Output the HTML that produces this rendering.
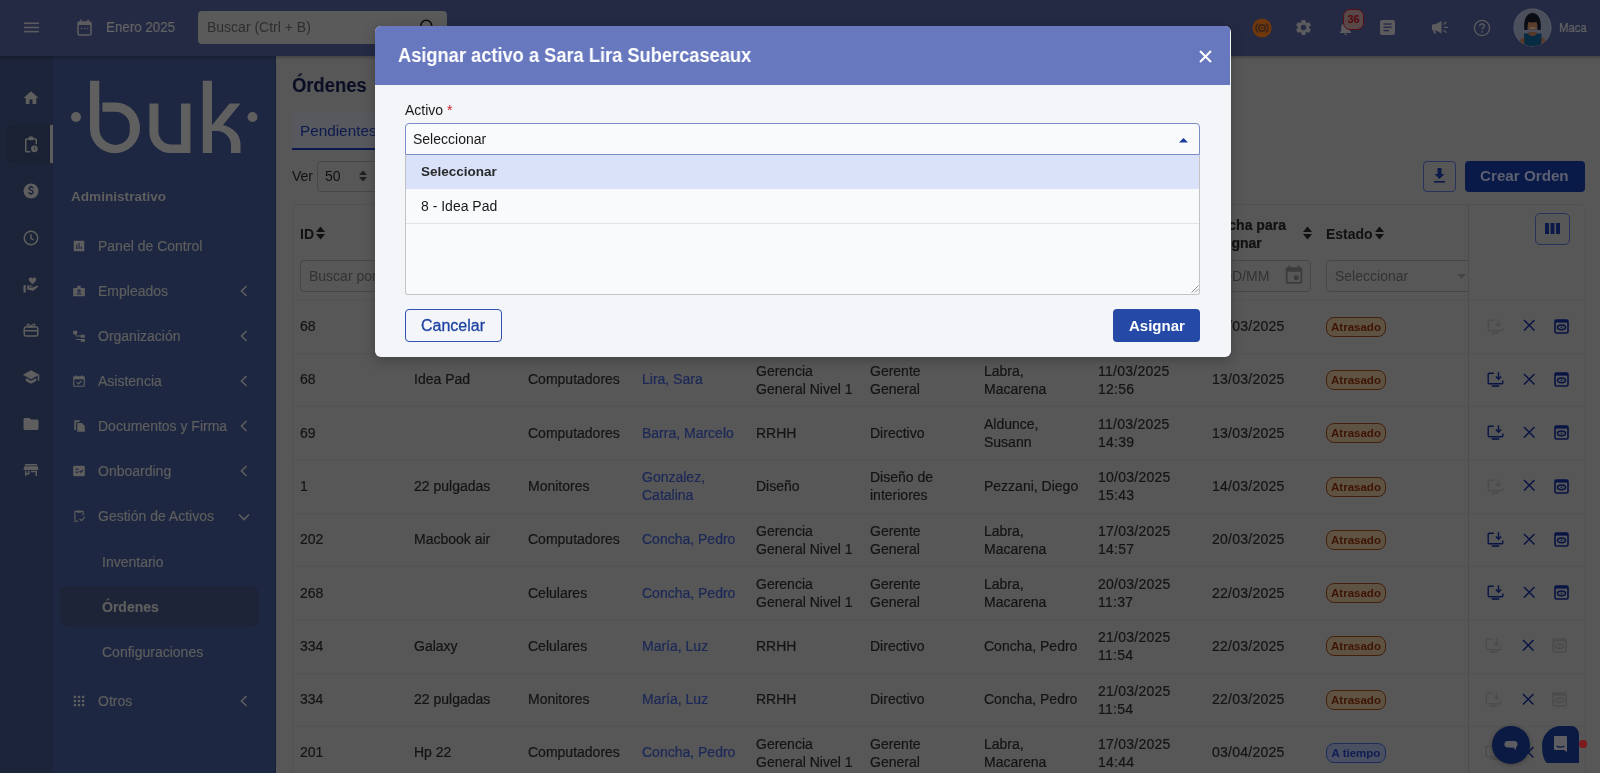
<!DOCTYPE html>
<html><head><meta charset="utf-8"><style>
*{box-sizing:border-box;margin:0;padding:0}
html,body{width:1600px;height:773px;overflow:hidden;background:#575757;font-family:"Liberation Sans",sans-serif;position:relative;-webkit-font-smoothing:antialiased}
.a{position:absolute}
.t,.td,.mi,.badge{will-change:transform}
.t{position:absolute;white-space:nowrap;line-height:1}
.mi{position:absolute;left:98px;font-size:14px;color:#5e5e5e;white-space:nowrap;line-height:1;-webkit-text-stroke:0.2px #5e5e5e}
.td{position:absolute;font-size:14px;color:#141414;white-space:nowrap;line-height:18.4px;-webkit-text-stroke:0.2px currentColor}
.lk{color:#1b2858}
.rl{position:absolute;left:292px;width:1293px;height:1px;background:#525252}
.badge{position:absolute;left:1326px;width:60px;height:20px;border-radius:8px;background:#5e5242;border:1px solid #44200c;color:#3e1404;font-weight:bold;font-size:11.5px;line-height:18px;text-align:center}
</style></head><body>
<div class="a" style="left:0;top:0;width:1600px;height:56px;background:#252a44"></div>
<div class="a" style="left:0;top:56px;width:53px;height:717px;background:#1c2439"></div>
<div class="a" style="left:53px;top:56px;width:223px;height:717px;background:#1e2741"></div>
<div class="a" style="left:275px;top:56px;width:1px;height:717px;background:#172039"></div>
<div class="a" style="left:0;top:56px;width:1600px;height:4px;background:linear-gradient(rgba(0,0,0,.22),rgba(0,0,0,0))"></div>
<svg class="a" style="left:24px;top:22px" width="16" height="11"><g stroke="#5c5c5f" stroke-width="1.6"><line x1="0" y1="1.3" x2="15" y2="1.3"/><line x1="0" y1="5.5" x2="15" y2="5.5"/><line x1="0" y1="9.6" x2="15" y2="9.6"/></g></svg>
<svg class="a" style="left:77px;top:19px" width="15" height="17" viewBox="0 0 15 17"><rect x="1" y="3" width="13" height="13" rx="1.5" fill="none" stroke="#5c5c5f" stroke-width="1.6"/><rect x="1" y="3" width="13" height="3" fill="#5c5c5f"/><line x1="4" y1="0.5" x2="4" y2="3" stroke="#5c5c5f" stroke-width="1.5"/><line x1="11" y1="0.5" x2="11" y2="3" stroke="#5c5c5f" stroke-width="1.5"/><circle cx="4.5" cy="9.5" r=".8" fill="#5c5c5f"/><circle cx="7.5" cy="9.5" r=".8" fill="#5c5c5f"/><circle cx="10.5" cy="9.5" r=".8" fill="#5c5c5f"/></svg>
<div class="t" style="left:106px;top:19px;font-size:15px;color:#666;-webkit-text-stroke:0.2px #666;transform:scaleX(0.89);transform-origin:0 0">Enero 2025</div>
<div class="a" style="left:198px;top:11px;width:249px;height:33px;background:#5a5a5a;border-radius:4px"></div>
<div class="t" style="left:207px;top:20px;font-size:14px;color:#2e2e2e">Buscar (Ctrl + B)</div>
<svg class="a" style="left:419px;top:17px" width="18" height="18"><circle cx="7.3" cy="8.6" r="5.4" fill="none" stroke="#0a0a0a" stroke-width="1.5"/></svg>
<svg class="a" style="left:1252px;top:18px" width="20" height="20"><circle cx="10" cy="10" r="9.6" fill="#6e380c"/><circle cx="10" cy="10" r="3.2" fill="none" stroke="#3a2418" stroke-width="1.5"/><circle cx="10" cy="10" r="1" fill="#3a2418"/><path d="M6 5.5a6 6 0 0 0 0 9M14 5.5a6 6 0 0 1 0 9" fill="none" stroke="#3a2418" stroke-width="1.5"/></svg>
<svg class="a" style="left:1294px;top:18px" width="19" height="19" viewBox="0 0 24 24"><path fill="#5c5c5f" d="M19.14 12.94c.04-.3.06-.61.06-.94 0-.32-.02-.64-.07-.94l2.03-1.58a.49.49 0 0 0 .12-.61l-1.92-3.32a.488.488 0 0 0-.59-.22l-2.39.96c-.5-.38-1.03-.7-1.62-.94l-.36-2.54a.484.484 0 0 0-.48-.41h-3.84c-.24 0-.43.17-.47.41l-.36 2.54c-.59.24-1.13.57-1.62.94l-2.39-.96c-.22-.08-.47 0-.59.22L2.74 8.87c-.12.21-.08.47.12.61l2.03 1.58c-.05.3-.09.63-.09.94s.02.64.07.94l-2.03 1.58a.49.49 0 0 0-.12.61l1.92 3.32c.12.22.37.29.59.22l2.39-.96c.5.38 1.03.7 1.62.94l.36 2.54c.05.24.24.41.48.41h3.84c.24 0 .44-.17.47-.41l.36-2.54c.59-.24 1.13-.56 1.62-.94l2.39.96c.22.08.47 0 .59-.22l1.92-3.32c.12-.22.07-.47-.12-.61l-2.01-1.58zM12 15.6c-1.98 0-3.6-1.62-3.6-3.6s1.62-3.6 3.6-3.6 3.6 1.62 3.6 3.6-1.62 3.6-3.6 3.6z"/></svg>
<svg class="a" style="left:1337px;top:19px" width="17" height="18" viewBox="0 0 24 24"><path fill="#5c5c5f" d="M12 22c1.1 0 2-.9 2-2h-4c0 1.1.9 2 2 2zm6-6v-5c0-3.07-1.63-5.64-4.5-6.32V4c0-.83-.67-1.5-1.5-1.5s-1.5.67-1.5 1.5v.68C7.64 5.36 6 7.92 6 11v5l-2 2v1h16v-1l-2-2z"/></svg>
<div class="a" style="left:1343px;top:9px;width:21px;height:21px;border-radius:7px;background:#584848;border:1.5px solid #561018;color:#52080e;font-weight:bold;font-size:11px;line-height:18px;text-align:center">36</div>
<svg class="a" style="left:1380px;top:20px" width="15" height="15"><rect x="0" y="0" width="15" height="15" rx="2" fill="#5c5c5f"/><g stroke="#252a44" stroke-width="1.4"><line x1="3.5" y1="4" x2="11.5" y2="4"/><line x1="3.5" y1="7.3" x2="11.5" y2="7.3"/><line x1="3.5" y1="10.6" x2="9" y2="10.6"/></g></svg>
<svg class="a" style="left:1432px;top:21px" width="17" height="13" viewBox="0 0 17 13"><path fill="#5c5c5f" d="M0 4.2a1 1 0 0 1 1-1h2.5L9.5 0v12.5L3.5 9.3H3l1 3.2H2L1 9.3a1 1 0 0 1-1-1z"/><g stroke="#5c5c5f" stroke-width="1.3" stroke-linecap="round"><line x1="12.5" y1="6.3" x2="15.5" y2="6.3"/><line x1="12" y1="3" x2="14" y2="1.3"/><line x1="12" y1="9.6" x2="14" y2="11.3"/></g></svg>
<svg class="a" style="left:1473px;top:19px" width="18" height="18"><circle cx="9" cy="9" r="7.6" fill="none" stroke="#5c5c5f" stroke-width="1.3"/><path d="M6.6 7.2c0-1.4 1.1-2.4 2.4-2.4s2.4 1 2.4 2.3c0 1.6-2.3 1.7-2.3 3.4" fill="none" stroke="#5c5c5f" stroke-width="1.3"/><circle cx="9.1" cy="12.8" r=".9" fill="#5c5c5f"/></svg>
<svg class="a" style="left:1513px;top:8px" width="39" height="39" viewBox="0 0 39 39"><defs><clipPath id="av"><circle cx="19.5" cy="19.5" r="18.6"/></clipPath></defs><circle cx="19.5" cy="19.5" r="19" fill="#5a5e68"/><circle cx="19.5" cy="19.5" r="18.3" fill="#4b4f5c"/><g clip-path="url(#av)"><path d="M5 39c0-6 2-9 7-10h15c5 1 7 4 7 10z" fill="#55392a"/><path d="M11.5 39l-0.5-13.5h17.5l-0.5 13.5z" fill="#062b42"/><path d="M15 24h9l-1 3c-2 1.5-5 1.5-7 0z" fill="#55392a"/><ellipse cx="19.5" cy="15.5" rx="5.8" ry="7" fill="#5b3d2c"/><path d="M11.5 22c-1.5-10 2-17 8-17s9.5 7 8 17h-3c0-3 0-6-1-8-3 .5-6 .5-8 0-1 2-1 5-1 8z" fill="#0a0c14"/><path d="M17 19.5c1.5 1 3.5 1 5 0" stroke="#8a8a8a" stroke-width=".8" fill="none"/></g></svg>
<div class="t" style="left:1559px;top:21px;font-size:13px;color:#666;-webkit-text-stroke:0.2px #666;transform:scaleX(0.87);transform-origin:0 0">Maca</div>
<div class="a" style="left:7px;top:125px;width:46px;height:38px;background:#1a2133;border-radius:8px 0 0 8px"></div>
<div class="a" style="left:50px;top:125px;width:3px;height:38px;background:#5c5c5c"></div>
<svg class="a" style="left:22px;top:89px" width="18" height="18" viewBox="0 0 24 24"><path fill="#5e5e5e" d="M10 20v-6h4v6h5v-8h3L12 3 2 12h3v8z"/></svg>
<svg class="a" style="left:22px;top:136px" width="18" height="18" viewBox="0 0 24 24"><path fill="none" stroke="#5e5e5e" stroke-width="2" d="M9 4H6a1 1 0 0 0-1 1v15a1 1 0 0 0 1 1h5M15 4h3a1 1 0 0 1 1 1v6"/><rect x="8.5" y="1" width="7" height="4.5" rx="1.2" fill="#5e5e5e"/><circle cx="12" cy="1.6" r="1.3" fill="#5e5e5e"/><circle cx="16.5" cy="17" r="4.5" fill="#5e5e5e"/><path d="M16.5 14.8v2.4l1.6 1" stroke="#1a2133" stroke-width="1.2" fill="none"/></svg>
<svg class="a" style="left:22px;top:182px" width="18" height="18" viewBox="0 0 24 24"><circle cx="12" cy="12" r="10" fill="#5e5e5e"/><path d="M14.8 8.6c-.3-1.2-1.3-2-2.8-2-1.6 0-2.7.9-2.7 2.1 0 2.9 5.6 1.6 5.6 4.7 0 1.3-1.2 2.2-2.9 2.2-1.6 0-2.7-.9-2.9-2.2M12 5v1.6M12 15.6v1.6" fill="none" stroke="#1c2439" stroke-width="1.8"/></svg>
<svg class="a" style="left:22px;top:229px" width="18" height="18" viewBox="0 0 24 24"><circle cx="12" cy="12" r="9" fill="none" stroke="#5e5e5e" stroke-width="2"/><path d="M12 7v5.5l3.5 2" stroke="#5e5e5e" stroke-width="2" fill="none"/></svg>
<svg class="a" style="left:22px;top:276px" width="18" height="18" viewBox="0 0 24 24"><path fill="#5e5e5e" d="M16.5 2c-1.2 0-2 .8-2.5 1.5C13.5 2.8 12.7 2 11.5 2 10 2 9 3.2 9 4.6c0 2.2 2.5 3.9 5 6.2 2.5-2.3 5-4 5-6.2C19 3.2 18 2 16.5 2zM2 12h3v10H2zM7 12.5h5.5c1 0 1.8.7 1.8 1.6H9.5v1.2h5.2l4.8-2.2c.9-.3 1.9.1 2.3.9L15 19.5l-8-1.5z"/></svg>
<svg class="a" style="left:22px;top:321px" width="18" height="18" viewBox="0 0 24 24"><rect x="3" y="8" width="18" height="12" rx="2" fill="none" stroke="#5e5e5e" stroke-width="2"/><line x1="3" y1="13" x2="21" y2="13" stroke="#5e5e5e" stroke-width="2"/><path d="M12 8c-1-3-4-5-5-3s3 3 5 3c2 0 6-1 5-3s-4 0-5 3" fill="none" stroke="#5e5e5e" stroke-width="1.6"/></svg>
<svg class="a" style="left:22px;top:368px" width="18" height="18" viewBox="0 0 24 24"><path fill="#5e5e5e" d="M5 13.2v4L12 21l7-3.8v-4L12 17zM12 3L1 9l11 6 9-4.9V17h2V9z"/></svg>
<svg class="a" style="left:22px;top:415px" width="18" height="18" viewBox="0 0 24 24"><path fill="#5e5e5e" d="M10 4H4c-1.1 0-2 .9-2 2v12c0 1.1.9 2 2 2h16c1.1 0 2-.9 2-2V8c0-1.1-.9-2-2-2h-8l-2-2z"/></svg>
<svg class="a" style="left:22px;top:461px" width="18" height="18" viewBox="0 0 24 24"><path fill="#5e5e5e" d="M4 4h16v2H4zM3 7h18l1 5H2zM4 13h2v7H4zM18 13h2v7h-2zM6 18h4v-5h-2v3H6zM12 13h6v2h-6z"/></svg>
<svg class="a" style="left:60px;top:75px" width="205" height="85" viewBox="60 75 205 85">
<circle cx="76" cy="117" r="5" fill="#5f5f5f"/>
<circle cx="252.5" cy="117" r="5" fill="#5f5f5f"/>
<path fill="#5f5f5f" d="M90 80.7h9.3v21.7h16.5a24.5 25.5 0 0 1 24.2 25.5a25.3 25.3 0 0 1-25.3 25.3h-0.2a24.5 24.5 0 0 1-24.5-24.5zM99.3 111.8v16.7a16.4 16.4 0 0 0 16.4 16.4a14.1 14.1 0 0 0 14.1-14.1v-4.5a14.5 14.5 0 0 0-14.5-14.5z"/>
<path fill="#5f5f5f" d="M149.4 103.5h9v28a13 13 0 0 0 13 13h9.6v-41h9.4v49.5h-20a21 21 0 0 1-21-21z"/>
<path fill="#5f5f5f" d="M202.8 80.7h9.2v44.5l17.5-21.7h11l-17.5 21.5c9 2 17.5 9 17.5 19v9h-9.5v-8.5c0-7.5-7-13.5-14-13.5h-5v22h-9.2z"/>
<rect x="99.4" y="101.5" width="3" height="10.5" fill="#1e2741"/>
</svg>
<div class="t" style="left:71px;top:190px;font-size:13.6px;font-weight:bold;color:#5e5e5e">Administrativo</div>
<div class="mi" style="top:239px">Panel de Control</div>
<div class="mi" style="top:284px">Empleados</div>
<svg class="a" style="left:240px;top:285px" width="8" height="12"><path d="M6.5 1l-5 5 5 5" fill="none" stroke="#5e5e5e" stroke-width="1.6"/></svg>
<div class="mi" style="top:329px">Organización</div>
<svg class="a" style="left:240px;top:330px" width="8" height="12"><path d="M6.5 1l-5 5 5 5" fill="none" stroke="#5e5e5e" stroke-width="1.6"/></svg>
<div class="mi" style="top:374px">Asistencia</div>
<svg class="a" style="left:240px;top:375px" width="8" height="12"><path d="M6.5 1l-5 5 5 5" fill="none" stroke="#5e5e5e" stroke-width="1.6"/></svg>
<div class="mi" style="top:419px">Documentos y Firma</div>
<svg class="a" style="left:240px;top:420px" width="8" height="12"><path d="M6.5 1l-5 5 5 5" fill="none" stroke="#5e5e5e" stroke-width="1.6"/></svg>
<div class="mi" style="top:464px">Onboarding</div>
<svg class="a" style="left:240px;top:465px" width="8" height="12"><path d="M6.5 1l-5 5 5 5" fill="none" stroke="#5e5e5e" stroke-width="1.6"/></svg>
<div class="mi" style="top:509px">Gestión de Activos</div>
<svg class="a" style="left:238px;top:513px" width="12" height="8"><path d="M1 1.5l5 5 5-5" fill="none" stroke="#5e5e5e" stroke-width="1.6"/></svg>
<div class="mi" style="top:694px">Otros</div>
<svg class="a" style="left:240px;top:695px" width="8" height="12"><path d="M6.5 1l-5 5 5 5" fill="none" stroke="#5e5e5e" stroke-width="1.6"/></svg>
<svg class="a" style="left:72px;top:239px" width="14" height="14" viewBox="0 0 24 24"><path fill="#5e5e5e" d="M3 3h18v18H3z"/><g stroke="#1e2741" stroke-width="2"><line x1="8" y1="10" x2="8" y2="17"/><line x1="12" y1="7" x2="12" y2="17"/><line x1="16" y1="13" x2="16" y2="17"/></g></svg>
<svg class="a" style="left:72px;top:284px" width="14" height="14" viewBox="0 0 24 24"><path fill="#5e5e5e" d="M2 7h20v14H2zM9 3h6v4H9z"/><g stroke="#1e2741" stroke-width="2"><circle cx="12" cy="12" r="2" fill="none"/><line x1="8" y1="17" x2="16" y2="17"/></g></svg>
<svg class="a" style="left:72px;top:329px" width="14" height="14" viewBox="0 0 24 24"><path fill="#5e5e5e" d="M2 3h7v6H2zM15 10h7v5h-7zM15 17h7v5h-7zM5 9h2v10h8v-2H7v-4h8v-2H5z"/></svg>
<svg class="a" style="left:72px;top:374px" width="14" height="14" viewBox="0 0 24 24"><rect x="3" y="5" width="18" height="16" rx="1" fill="none" stroke="#5e5e5e" stroke-width="2"/><rect x="3" y="5" width="18" height="4" fill="#5e5e5e"/><path d="M8 14l3 3 5-5" fill="none" stroke="#5e5e5e" stroke-width="2"/><line x1="7" y1="2" x2="7" y2="5" stroke="#5e5e5e" stroke-width="2"/><line x1="17" y1="2" x2="17" y2="5" stroke="#5e5e5e" stroke-width="2"/></svg>
<svg class="a" style="left:72px;top:419px" width="14" height="14" viewBox="0 0 24 24"><path fill="#5e5e5e" d="M4 2h9v3H7v14H4zM9 7h8l5 5v10H9z"/></svg>
<svg class="a" style="left:72px;top:464px" width="14" height="14" viewBox="0 0 24 24"><rect x="2" y="3" width="20" height="18" rx="2" fill="#5e5e5e"/><g stroke="#1e2741" stroke-width="2" fill="none"><line x1="6" y1="9" x2="11" y2="9"/><line x1="6" y1="14" x2="11" y2="14"/><path d="M13 12l2 2 4-4"/></g></svg>
<svg class="a" style="left:72px;top:509px" width="14" height="14" viewBox="0 0 24 24"><path fill="none" stroke="#5e5e5e" stroke-width="2" d="M9 4H5v17h6M15 4h4v7"/><rect x="8.5" y="2.5" width="7" height="4" rx="1" fill="#5e5e5e"/><path d="M13 17l3 3 6-6" fill="none" stroke="#5e5e5e" stroke-width="2"/></svg>
<svg class="a" style="left:72px;top:694px" width="14" height="14" viewBox="0 0 24 24"><g fill="#5e5e5e"><rect x="3" y="3" width="4" height="4"/><rect x="10" y="3" width="4" height="4"/><rect x="17" y="3" width="4" height="4"/><rect x="3" y="10" width="4" height="4"/><rect x="10" y="10" width="4" height="4"/><rect x="17" y="10" width="4" height="4"/><rect x="3" y="17" width="4" height="4"/><rect x="10" y="17" width="4" height="4"/><rect x="17" y="17" width="4" height="4"/></g></svg>
<div class="a" style="left:60px;top:586px;width:199px;height:41px;background:#1d2437;border-radius:8px"></div>
<div class="mi" style="left:102px;top:555px">Inventario</div>
<div class="mi" style="left:102px;top:600px;font-weight:bold">Órdenes</div>
<div class="mi" style="left:102px;top:645px">Configuraciones</div>
<div class="t" style="left:292px;top:74.7px;font-size:20px;font-weight:bold;color:#080c22;transform:scaleX(0.92);transform-origin:0 0">Órdenes</div>
<div class="a" style="left:292px;top:113px;width:120px;height:35px;background:#57595e"></div>
<div class="a" style="left:292px;top:148px;width:120px;height:1.6px;background:#0b1850"></div>
<div class="t" style="left:300px;top:123px;font-size:15.3px;color:#0d1a4e">Pendientes</div>
<div class="t" style="left:292px;top:169px;font-size:14px;color:#111">Ver</div>
<div class="a" style="left:317px;top:161px;width:70px;height:31px;border:1px solid #474747;border-radius:4px"></div>
<div class="t" style="left:325px;top:169px;font-size:14px;color:#111">50</div>
<svg class="a" style="left:359px;top:170px" width="8" height="12"><path d="M0 5l4-4.5L8 5zM0 7l4 4.5L8 7z" fill="#222"/></svg>
<div class="a" style="left:1423px;top:161px;width:33px;height:31px;border:1px solid #27325e;border-radius:4px"></div>
<svg class="a" style="left:1433px;top:168px" width="13" height="15"><path d="M4.5 0h4v6h3L6.5 11 1.5 6h3z" fill="#0c1a4a"/><rect x="1" y="13" width="11" height="1.6" fill="#0c1a4a"/></svg>
<div class="a" style="left:1465px;top:161px;width:120px;height:31px;background:#0a1a48;border-radius:4px"></div>
<div class="t" style="left:1480px;top:168px;font-size:15.2px;font-weight:bold;color:#5c6070">Crear Orden</div>
<div class="a" style="left:292px;top:204px;width:1294px;height:600px;border:1px solid #515151;border-radius:6px"></div>
<div class="a" style="left:1468px;top:205px;width:1px;height:568px;background:#4d4d4d"></div>
<div class="a" style="left:1535px;top:213px;width:35px;height:32px;border:1px solid #27325e;border-radius:5px"></div>
<svg class="a" style="left:1545px;top:223px" width="15" height="11"><g fill="#0c1a4a"><rect x="0" y="0" width="4" height="11"/><rect x="5.5" y="0" width="4" height="11"/><rect x="11" y="0" width="4" height="11"/></g></svg>
<div class="t" style="left:300px;top:227px;font-size:14px;font-weight:bold;color:#111">ID</div>
<svg class="a" style="left:316px;top:226px" width="9" height="14"><path d="M0 6l4.5-5.5L9 6zM0 8l4.5 5.5L9 8z" fill="#111"/></svg>
<div class="a" style="left:300px;top:260px;width:100px;height:32px;border:1px solid #474747;border-radius:4px"></div>
<div class="t" style="left:309px;top:269px;font-size:14px;color:#333">Buscar por</div>
<div class="td" style="left:1212px;top:216px;font-weight:bold;color:#111">Fecha para<br>asignar</div>
<svg class="a" style="left:1302.5px;top:226px" width="9" height="14"><path d="M0 6l4.5-5.5L9 6zM0 8l4.5 5.5L9 8z" fill="#111"/></svg>
<div class="t" style="left:1326px;top:227px;font-size:14px;font-weight:bold;color:#111">Estado</div>
<svg class="a" style="left:1374.5px;top:226px" width="9" height="14"><path d="M0 6l4.5-5.5L9 6zM0 8l4.5 5.5L9 8z" fill="#111"/></svg>
<div class="a" style="left:1212px;top:260px;width:99px;height:32px;border:1px solid #474747;border-radius:4px"></div>
<div class="t" style="left:1222px;top:269px;font-size:14px;color:#333">DD/MM</div>
<svg class="a" style="left:1283px;top:263.5px" width="22" height="23" viewBox="0 0 24 24"><path fill="#3c3c3c" d="M17 12h-5v5h5v-5zM16 1v2H8V1H6v2H5c-1.11 0-2 .9-2 2v14a2 2 0 0 0 2 2h14c1.1 0 2-.9 2-2V5c0-1.1-.9-2-2-2h-1V1h-2zm3 18H5V8h14v11z"/></svg>
<div class="a" style="left:1326px;top:260px;width:160px;height:32px;border:1px solid #474747;border-radius:4px 0 0 4px"></div>
<div class="t" style="left:1335px;top:269px;font-size:14px;color:#333">Seleccionar</div>
<svg class="a" style="left:1457px;top:274px" width="9" height="5"><path d="M0 0h9L4.5 4.5z" fill="#444"/></svg>
<div class="a" style="left:1469px;top:206px;width:116px;height:94px;background:#575757"></div>
<div class="a" style="left:1535px;top:213px;width:35px;height:32px;border:1px solid #27325e;border-radius:5px"></div>
<svg class="a" style="left:1545px;top:223px" width="15" height="11"><g fill="#0c1a4a"><rect x="0" y="0" width="4" height="11"/><rect x="5.5" y="0" width="4" height="11"/><rect x="11" y="0" width="4" height="11"/></g></svg>
<div class="rl" style="top:299.4px"></div>
<div class="td" style="left:300px;top:317.1px">68</div>
<div class="td" style="left:414px;top:317.1px">Idea Pad</div>
<div class="td" style="left:528px;top:317.1px">Computadores</div>
<div class="td lk" style="left:642px;top:317.1px">Lira, Sara</div>
<div class="td" style="left:756px;top:308.6px">Gerencia<br>General Nivel 1</div>
<div class="td" style="left:870px;top:308.6px">Gerente<br>General</div>
<div class="td" style="left:984px;top:308.6px">Labra,<br>Macarena</div>
<div class="td" style="left:1098px;top:308.6px;letter-spacing:0.25px">11/03/2025<br>12:56</div>
<div class="td" style="left:1212px;top:317.1px;letter-spacing:0.25px">13/03/2025</div>
<div class="badge" style="top:316.6px">Atrasado</div>
<svg class="a" style="left:1487px;top:318.6px" width="17" height="16" viewBox="0 0 17 16"><path d="M6.8 1.2H2.2a1 1 0 0 0-1 1v8.6a1 1 0 0 0 1 1h12.6a1 1 0 0 0 1-1V8.6" fill="none" stroke="#4c4c4c" stroke-width="1.4"/><path d="M11.5 0.3v6.8M8.9 4.6l2.6 2.6 2.6-2.6" fill="none" stroke="#4c4c4c" stroke-width="1.4"/><rect x="4.8" y="13.2" width="7.4" height="1.6" fill="#4c4c4c"/></svg>
<svg class="a" style="left:1522.5px;top:319.4px" width="12" height="12"><path d="M1 1l10.5 10.5M11.5 1L1 11.5" stroke="#081444" stroke-width="1.5"/></svg>
<svg class="a" style="left:1553.5px;top:318.6px" width="15" height="15" viewBox="0 0 15 15"><rect x="1" y="1" width="13" height="13" rx="1.5" fill="none" stroke="#081444" stroke-width="1.6"/><rect x="1" y="1" width="13" height="2.6" fill="#081444"/><ellipse cx="7.5" cy="8.3" rx="4" ry="2.4" fill="none" stroke="#081444" stroke-width="1.5"/><circle cx="7.5" cy="8.3" r="0.9" fill="#081444"/></svg>
<div class="rl" style="top:352.7px"></div>
<div class="td" style="left:300px;top:370.4px">68</div>
<div class="td" style="left:414px;top:370.4px">Idea Pad</div>
<div class="td" style="left:528px;top:370.4px">Computadores</div>
<div class="td lk" style="left:642px;top:370.4px">Lira, Sara</div>
<div class="td" style="left:756px;top:361.9px">Gerencia<br>General Nivel 1</div>
<div class="td" style="left:870px;top:361.9px">Gerente<br>General</div>
<div class="td" style="left:984px;top:361.9px">Labra,<br>Macarena</div>
<div class="td" style="left:1098px;top:361.9px;letter-spacing:0.25px">11/03/2025<br>12:56</div>
<div class="td" style="left:1212px;top:370.4px;letter-spacing:0.25px">13/03/2025</div>
<div class="badge" style="top:369.9px">Atrasado</div>
<svg class="a" style="left:1487px;top:371.9px" width="17" height="16" viewBox="0 0 17 16"><path d="M6.8 1.2H2.2a1 1 0 0 0-1 1v8.6a1 1 0 0 0 1 1h12.6a1 1 0 0 0 1-1V8.6" fill="none" stroke="#081444" stroke-width="1.4"/><path d="M11.5 0.3v6.8M8.9 4.6l2.6 2.6 2.6-2.6" fill="none" stroke="#081444" stroke-width="1.4"/><rect x="4.8" y="13.2" width="7.4" height="1.6" fill="#081444"/></svg>
<svg class="a" style="left:1522.5px;top:372.8px" width="12" height="12"><path d="M1 1l10.5 10.5M11.5 1L1 11.5" stroke="#081444" stroke-width="1.5"/></svg>
<svg class="a" style="left:1553.5px;top:371.9px" width="15" height="15" viewBox="0 0 15 15"><rect x="1" y="1" width="13" height="13" rx="1.5" fill="none" stroke="#081444" stroke-width="1.6"/><rect x="1" y="1" width="13" height="2.6" fill="#081444"/><ellipse cx="7.5" cy="8.3" rx="4" ry="2.4" fill="none" stroke="#081444" stroke-width="1.5"/><circle cx="7.5" cy="8.3" r="0.9" fill="#081444"/></svg>
<div class="rl" style="top:406.0px"></div>
<div class="td" style="left:300px;top:423.7px">69</div>
<div class="td" style="left:528px;top:423.7px">Computadores</div>
<div class="td lk" style="left:642px;top:423.7px">Barra, Marcelo</div>
<div class="td" style="left:756px;top:423.7px">RRHH</div>
<div class="td" style="left:870px;top:423.7px">Directivo</div>
<div class="td" style="left:984px;top:415.2px">Aldunce,<br>Susann</div>
<div class="td" style="left:1098px;top:415.2px;letter-spacing:0.25px">11/03/2025<br>14:39</div>
<div class="td" style="left:1212px;top:423.7px;letter-spacing:0.25px">13/03/2025</div>
<div class="badge" style="top:423.2px">Atrasado</div>
<svg class="a" style="left:1487px;top:425.2px" width="17" height="16" viewBox="0 0 17 16"><path d="M6.8 1.2H2.2a1 1 0 0 0-1 1v8.6a1 1 0 0 0 1 1h12.6a1 1 0 0 0 1-1V8.6" fill="none" stroke="#081444" stroke-width="1.4"/><path d="M11.5 0.3v6.8M8.9 4.6l2.6 2.6 2.6-2.6" fill="none" stroke="#081444" stroke-width="1.4"/><rect x="4.8" y="13.2" width="7.4" height="1.6" fill="#081444"/></svg>
<svg class="a" style="left:1522.5px;top:426.1px" width="12" height="12"><path d="M1 1l10.5 10.5M11.5 1L1 11.5" stroke="#081444" stroke-width="1.5"/></svg>
<svg class="a" style="left:1553.5px;top:425.2px" width="15" height="15" viewBox="0 0 15 15"><rect x="1" y="1" width="13" height="13" rx="1.5" fill="none" stroke="#081444" stroke-width="1.6"/><rect x="1" y="1" width="13" height="2.6" fill="#081444"/><ellipse cx="7.5" cy="8.3" rx="4" ry="2.4" fill="none" stroke="#081444" stroke-width="1.5"/><circle cx="7.5" cy="8.3" r="0.9" fill="#081444"/></svg>
<div class="rl" style="top:459.3px"></div>
<div class="td" style="left:300px;top:476.9px">1</div>
<div class="td" style="left:414px;top:476.9px">22 pulgadas</div>
<div class="td" style="left:528px;top:476.9px">Monitores</div>
<div class="td lk" style="left:642px;top:468.4px">Gonzalez,<br>Catalina</div>
<div class="td" style="left:756px;top:476.9px">Diseño</div>
<div class="td" style="left:870px;top:468.4px">Diseño de<br>interiores</div>
<div class="td" style="left:984px;top:476.9px">Pezzani, Diego</div>
<div class="td" style="left:1098px;top:468.4px;letter-spacing:0.25px">10/03/2025<br>15:43</div>
<div class="td" style="left:1212px;top:476.9px;letter-spacing:0.25px">14/03/2025</div>
<div class="badge" style="top:476.5px">Atrasado</div>
<svg class="a" style="left:1487px;top:478.5px" width="17" height="16" viewBox="0 0 17 16"><path d="M6.8 1.2H2.2a1 1 0 0 0-1 1v8.6a1 1 0 0 0 1 1h12.6a1 1 0 0 0 1-1V8.6" fill="none" stroke="#4c4c4c" stroke-width="1.4"/><path d="M11.5 0.3v6.8M8.9 4.6l2.6 2.6 2.6-2.6" fill="none" stroke="#4c4c4c" stroke-width="1.4"/><rect x="4.8" y="13.2" width="7.4" height="1.6" fill="#4c4c4c"/></svg>
<svg class="a" style="left:1522.5px;top:479.3px" width="12" height="12"><path d="M1 1l10.5 10.5M11.5 1L1 11.5" stroke="#081444" stroke-width="1.5"/></svg>
<svg class="a" style="left:1553.5px;top:478.5px" width="15" height="15" viewBox="0 0 15 15"><rect x="1" y="1" width="13" height="13" rx="1.5" fill="none" stroke="#081444" stroke-width="1.6"/><rect x="1" y="1" width="13" height="2.6" fill="#081444"/><ellipse cx="7.5" cy="8.3" rx="4" ry="2.4" fill="none" stroke="#081444" stroke-width="1.5"/><circle cx="7.5" cy="8.3" r="0.9" fill="#081444"/></svg>
<div class="rl" style="top:512.6px"></div>
<div class="td" style="left:300px;top:530.2px">202</div>
<div class="td" style="left:414px;top:530.2px">Macbook air</div>
<div class="td" style="left:528px;top:530.2px">Computadores</div>
<div class="td lk" style="left:642px;top:530.2px">Concha, Pedro</div>
<div class="td" style="left:756px;top:521.8px">Gerencia<br>General Nivel 1</div>
<div class="td" style="left:870px;top:521.8px">Gerente<br>General</div>
<div class="td" style="left:984px;top:521.8px">Labra,<br>Macarena</div>
<div class="td" style="left:1098px;top:521.8px;letter-spacing:0.25px">17/03/2025<br>14:57</div>
<div class="td" style="left:1212px;top:530.2px;letter-spacing:0.25px">20/03/2025</div>
<div class="badge" style="top:529.9px">Atrasado</div>
<svg class="a" style="left:1487px;top:531.9px" width="17" height="16" viewBox="0 0 17 16"><path d="M6.8 1.2H2.2a1 1 0 0 0-1 1v8.6a1 1 0 0 0 1 1h12.6a1 1 0 0 0 1-1V8.6" fill="none" stroke="#081444" stroke-width="1.4"/><path d="M11.5 0.3v6.8M8.9 4.6l2.6 2.6 2.6-2.6" fill="none" stroke="#081444" stroke-width="1.4"/><rect x="4.8" y="13.2" width="7.4" height="1.6" fill="#081444"/></svg>
<svg class="a" style="left:1522.5px;top:532.6px" width="12" height="12"><path d="M1 1l10.5 10.5M11.5 1L1 11.5" stroke="#081444" stroke-width="1.5"/></svg>
<svg class="a" style="left:1553.5px;top:531.9px" width="15" height="15" viewBox="0 0 15 15"><rect x="1" y="1" width="13" height="13" rx="1.5" fill="none" stroke="#081444" stroke-width="1.6"/><rect x="1" y="1" width="13" height="2.6" fill="#081444"/><ellipse cx="7.5" cy="8.3" rx="4" ry="2.4" fill="none" stroke="#081444" stroke-width="1.5"/><circle cx="7.5" cy="8.3" r="0.9" fill="#081444"/></svg>
<div class="rl" style="top:565.9px"></div>
<div class="td" style="left:300px;top:583.5px">268</div>
<div class="td" style="left:528px;top:583.5px">Celulares</div>
<div class="td lk" style="left:642px;top:583.5px">Concha, Pedro</div>
<div class="td" style="left:756px;top:575.0px">Gerencia<br>General Nivel 1</div>
<div class="td" style="left:870px;top:575.0px">Gerente<br>General</div>
<div class="td" style="left:984px;top:575.0px">Labra,<br>Macarena</div>
<div class="td" style="left:1098px;top:575.0px;letter-spacing:0.25px">20/03/2025<br>11:37</div>
<div class="td" style="left:1212px;top:583.5px;letter-spacing:0.25px">22/03/2025</div>
<div class="badge" style="top:583.1px">Atrasado</div>
<svg class="a" style="left:1487px;top:585.1px" width="17" height="16" viewBox="0 0 17 16"><path d="M6.8 1.2H2.2a1 1 0 0 0-1 1v8.6a1 1 0 0 0 1 1h12.6a1 1 0 0 0 1-1V8.6" fill="none" stroke="#081444" stroke-width="1.4"/><path d="M11.5 0.3v6.8M8.9 4.6l2.6 2.6 2.6-2.6" fill="none" stroke="#081444" stroke-width="1.4"/><rect x="4.8" y="13.2" width="7.4" height="1.6" fill="#081444"/></svg>
<svg class="a" style="left:1522.5px;top:585.9px" width="12" height="12"><path d="M1 1l10.5 10.5M11.5 1L1 11.5" stroke="#081444" stroke-width="1.5"/></svg>
<svg class="a" style="left:1553.5px;top:585.1px" width="15" height="15" viewBox="0 0 15 15"><rect x="1" y="1" width="13" height="13" rx="1.5" fill="none" stroke="#081444" stroke-width="1.6"/><rect x="1" y="1" width="13" height="2.6" fill="#081444"/><ellipse cx="7.5" cy="8.3" rx="4" ry="2.4" fill="none" stroke="#081444" stroke-width="1.5"/><circle cx="7.5" cy="8.3" r="0.9" fill="#081444"/></svg>
<div class="rl" style="top:619.2px"></div>
<div class="td" style="left:300px;top:636.8px">334</div>
<div class="td" style="left:414px;top:636.8px">Galaxy</div>
<div class="td" style="left:528px;top:636.8px">Celulares</div>
<div class="td lk" style="left:642px;top:636.8px">María, Luz</div>
<div class="td" style="left:756px;top:636.8px">RRHH</div>
<div class="td" style="left:870px;top:636.8px">Directivo</div>
<div class="td" style="left:984px;top:636.8px">Concha, Pedro</div>
<div class="td" style="left:1098px;top:628.3px;letter-spacing:0.25px">21/03/2025<br>11:54</div>
<div class="td" style="left:1212px;top:636.8px;letter-spacing:0.25px">22/03/2025</div>
<div class="badge" style="top:636.4px">Atrasado</div>
<svg class="a" style="left:1485px;top:638.4px" width="17" height="16" viewBox="0 0 17 16"><path d="M6.8 1.2H2.2a1 1 0 0 0-1 1v8.6a1 1 0 0 0 1 1h12.6a1 1 0 0 0 1-1V8.6" fill="none" stroke="#4c4c4c" stroke-width="1.4"/><path d="M11.5 0.3v6.8M8.9 4.6l2.6 2.6 2.6-2.6" fill="none" stroke="#4c4c4c" stroke-width="1.4"/><rect x="4.8" y="13.2" width="7.4" height="1.6" fill="#4c4c4c"/></svg>
<svg class="a" style="left:1521.5px;top:639.2px" width="12" height="12"><path d="M1 1l10.5 10.5M11.5 1L1 11.5" stroke="#081444" stroke-width="1.5"/></svg>
<svg class="a" style="left:1551.5px;top:638.4px" width="15" height="15" viewBox="0 0 15 15"><rect x="1" y="1" width="13" height="13" rx="1.5" fill="none" stroke="#4c4c4c" stroke-width="1.6"/><rect x="1" y="1" width="13" height="2.6" fill="#4c4c4c"/><ellipse cx="7.5" cy="8.3" rx="4" ry="2.4" fill="none" stroke="#4c4c4c" stroke-width="1.5"/><circle cx="7.5" cy="8.3" r="0.9" fill="#4c4c4c"/></svg>
<div class="rl" style="top:672.5px"></div>
<div class="td" style="left:300px;top:690.1px">334</div>
<div class="td" style="left:414px;top:690.1px">22 pulgadas</div>
<div class="td" style="left:528px;top:690.1px">Monitores</div>
<div class="td lk" style="left:642px;top:690.1px">María, Luz</div>
<div class="td" style="left:756px;top:690.1px">RRHH</div>
<div class="td" style="left:870px;top:690.1px">Directivo</div>
<div class="td" style="left:984px;top:690.1px">Concha, Pedro</div>
<div class="td" style="left:1098px;top:681.6px;letter-spacing:0.25px">21/03/2025<br>11:54</div>
<div class="td" style="left:1212px;top:690.1px;letter-spacing:0.25px">22/03/2025</div>
<div class="badge" style="top:689.7px">Atrasado</div>
<svg class="a" style="left:1485px;top:691.7px" width="17" height="16" viewBox="0 0 17 16"><path d="M6.8 1.2H2.2a1 1 0 0 0-1 1v8.6a1 1 0 0 0 1 1h12.6a1 1 0 0 0 1-1V8.6" fill="none" stroke="#4c4c4c" stroke-width="1.4"/><path d="M11.5 0.3v6.8M8.9 4.6l2.6 2.6 2.6-2.6" fill="none" stroke="#4c4c4c" stroke-width="1.4"/><rect x="4.8" y="13.2" width="7.4" height="1.6" fill="#4c4c4c"/></svg>
<svg class="a" style="left:1521.5px;top:692.5px" width="12" height="12"><path d="M1 1l10.5 10.5M11.5 1L1 11.5" stroke="#081444" stroke-width="1.5"/></svg>
<svg class="a" style="left:1551.5px;top:691.7px" width="15" height="15" viewBox="0 0 15 15"><rect x="1" y="1" width="13" height="13" rx="1.5" fill="none" stroke="#4c4c4c" stroke-width="1.6"/><rect x="1" y="1" width="13" height="2.6" fill="#4c4c4c"/><ellipse cx="7.5" cy="8.3" rx="4" ry="2.4" fill="none" stroke="#4c4c4c" stroke-width="1.5"/><circle cx="7.5" cy="8.3" r="0.9" fill="#4c4c4c"/></svg>
<div class="rl" style="top:725.8px"></div>
<div class="td" style="left:300px;top:743.4px">201</div>
<div class="td" style="left:414px;top:743.4px">Hp 22</div>
<div class="td" style="left:528px;top:743.4px">Computadores</div>
<div class="td lk" style="left:642px;top:743.4px">Concha, Pedro</div>
<div class="td" style="left:756px;top:734.9px">Gerencia<br>General Nivel 1</div>
<div class="td" style="left:870px;top:734.9px">Gerente<br>General</div>
<div class="td" style="left:984px;top:734.9px">Labra,<br>Macarena</div>
<div class="td" style="left:1098px;top:734.9px;letter-spacing:0.25px">17/03/2025<br>14:44</div>
<div class="td" style="left:1212px;top:743.4px;letter-spacing:0.25px">03/04/2025</div>
<div class="badge" style="top:743.0px;background:#4a4f62;border-color:#1e2c5a;color:#0e1e52">A tiempo</div>
<svg class="a" style="left:1485px;top:745.0px" width="17" height="16" viewBox="0 0 17 16"><path d="M6.8 1.2H2.2a1 1 0 0 0-1 1v8.6a1 1 0 0 0 1 1h12.6a1 1 0 0 0 1-1V8.6" fill="none" stroke="#4c4c4c" stroke-width="1.4"/><path d="M11.5 0.3v6.8M8.9 4.6l2.6 2.6 2.6-2.6" fill="none" stroke="#4c4c4c" stroke-width="1.4"/><rect x="4.8" y="13.2" width="7.4" height="1.6" fill="#4c4c4c"/></svg>
<svg class="a" style="left:1521.5px;top:745.8px" width="12" height="12"><path d="M1 1l10.5 10.5M11.5 1L1 11.5" stroke="#081444" stroke-width="1.5"/></svg>
<svg class="a" style="left:1551.5px;top:745.0px" width="15" height="15" viewBox="0 0 15 15"><rect x="1" y="1" width="13" height="13" rx="1.5" fill="none" stroke="#4c4c4c" stroke-width="1.6"/><rect x="1" y="1" width="13" height="2.6" fill="#4c4c4c"/><ellipse cx="7.5" cy="8.3" rx="4" ry="2.4" fill="none" stroke="#4c4c4c" stroke-width="1.5"/><circle cx="7.5" cy="8.3" r="0.9" fill="#4c4c4c"/></svg>
<div class="a" style="left:1492px;top:725.5px;width:38px;height:38px;border-radius:50%;background:#0b1a42;box-shadow:0 1px 4px rgba(0,0,0,.3)"></div>
<svg class="a" style="left:1504px;top:740.5px" width="15" height="11"><rect x="0.5" y="0" width="13" height="6.5" rx="3.2" fill="#5e5e62"/><path d="M9 6l3 3.2V6z" fill="#5e5e62"/></svg>
<div class="a" style="left:1542px;top:725.5px;width:37px;height:37.5px;border-radius:19px 7px 0 6px/19.5px 9px 0 17px;background:#0b1a42"></div>
<svg class="a" style="left:1553px;top:736px" width="15" height="16"><path d="M2 0h11a1 1 0 0 1 1 1v15l-3-2H2a1 1 0 0 1-1-1V1a1 1 0 0 1 1-1z" fill="#5e5e62"/><path d="M3.5 10c2 1.5 6 1.5 8 0" stroke="#0b1a42" stroke-width="1.2" fill="none"/></svg>
<div class="a" style="left:1579px;top:740px;width:8px;height:8px;border-radius:50%;background:#7e1a1c"></div>
<div class="a" style="left:375px;top:26px;width:855.5px;height:331px;border-radius:6px;background:#f4f5f8;box-shadow:0 3px 12px rgba(0,0,0,.25);overflow:hidden"><div class="a" style="left:0;top:0;width:855px;height:59px;background:#6778bf"></div></div>
<div class="t" style="left:398px;top:45px;font-size:20px;font-weight:bold;color:#fff;transform:scaleX(0.913);transform-origin:0 0">Asignar activo a Sara Lira Subercaseaux</div>
<svg class="a" style="left:1199px;top:50px" width="13" height="13"><path d="M1 1l11 11M12 1L1 12" stroke="#fff" stroke-width="2"/></svg>
<div class="t" style="left:405px;top:103px;font-size:14px;color:#1a1a1a">Activo <span style="color:#d0202a">*</span></div>
<div class="a" style="left:405px;top:123px;width:795px;height:32px;background:#f9fafc;border:1px solid #7b8cc8;border-radius:4px 4px 0 0"></div>
<div class="t" style="left:413px;top:132px;font-size:14px;color:#1a1a1a">Seleccionar</div>
<svg class="a" style="left:1178.5px;top:137.5px" width="9" height="5"><path d="M0 4.5L4.5 0l4.5 4.5z" fill="#1b3a99"/></svg>
<div class="a" style="left:405px;top:155px;width:795px;height:140px;border:1px solid #c4c4c4;border-top:none;border-radius:0 0 3px 3px;background:#f9fafc"></div>
<div class="a" style="left:406px;top:155px;width:793px;height:34px;background:#d9e2f8"></div>
<div class="a" style="left:406px;top:223px;width:793px;height:1px;background:#e2e3e6"></div>
<div class="t" style="left:421px;top:165px;font-size:13.5px;font-weight:bold;color:#2a2a2a">Seleccionar</div>
<div class="t" style="left:421px;top:199px;font-size:14px;color:#1a1a1a">8 - Idea Pad</div>
<svg class="a" style="left:1191px;top:285px" width="8" height="8"><path d="M7.5 0.5L0.5 7.5M7.5 4L4 7.5" stroke="#888" stroke-width="0.9"/></svg>
<div class="a" style="left:405px;top:309px;width:97px;height:33px;border:1px solid #2e50b0;border-radius:4px"></div>
<div class="t" style="left:421px;top:317.5px;font-size:16px;color:#1f44a4;-webkit-text-stroke:0.3px #1f44a4">Cancelar</div>
<div class="a" style="left:1113px;top:309px;width:87px;height:33px;background:#2549a6;border-radius:4px"></div>
<div class="t" style="left:1129px;top:318px;font-size:15px;font-weight:bold;color:#fff">Asignar</div>
</body></html>
